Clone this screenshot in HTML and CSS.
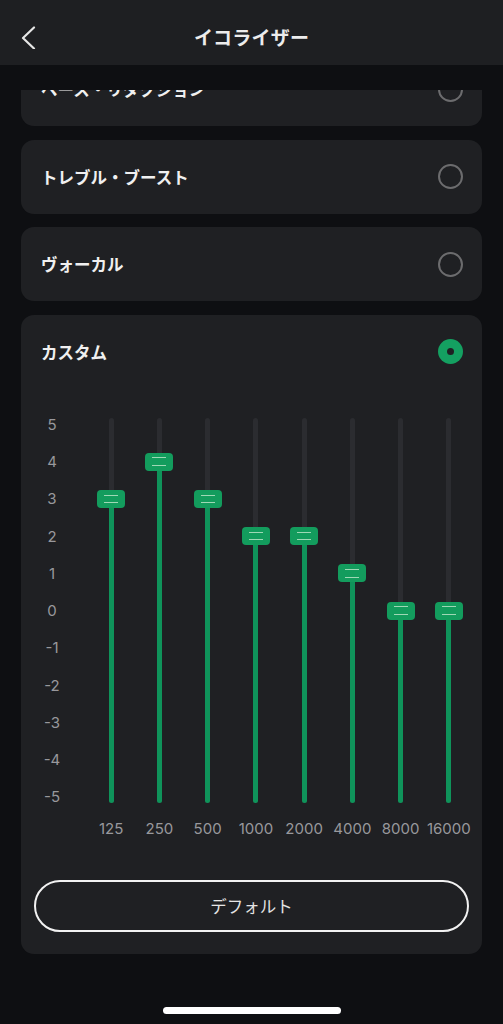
FILE: index.html
```html
<!DOCTYPE html>
<html lang="ja">
<head>
<meta charset="utf-8">
<title>イコライザー</title>
<link rel="stylesheet" href="styles.css">
</head>
<body>
<div class="screen">
  <header class="topbar">
    <svg class="back" width="24" height="24" viewBox="0 0 24 24" aria-hidden="true">
      <path d="M18 2.5 L7 13 L18 23.5" fill="none" stroke="#e6e6e6" stroke-width="2.2" stroke-linecap="round" stroke-linejoin="round"/>
    </svg>
    <h1 class="title">イコライザー</h1>
    <span></span>
  </header>
  <div class="band"></div>

  <main class="scroller">
    <div class="list">
      <div class="card">
        <div class="row"><span class="label">ベース・リダクション</span><span class="radio"></span></div>
      </div>
      <div class="card">
        <div class="row"><span class="label">トレブル・ブースト</span><span class="radio"></span></div>
      </div>
      <div class="card">
        <div class="row"><span class="label">ヴォーカル</span><span class="radio"></span></div>
      </div>

      <div class="card custom">
        <div class="row"><span class="label">カスタム</span><span class="radio is-on"></span></div>

        <div class="chart">
          <div class="axis">
            <span>5</span><span>4</span><span>3</span><span>2</span><span>1</span><span>0</span>
            <span>-1</span><span>-2</span><span>-3</span><span>-4</span><span>-5</span>
          </div>
          <div class="bands">
            <div class="band-col"><div class="track" style="--v:3"><div class="fill"></div><div class="knob"></div></div><span class="freq">125</span></div>
            <div class="band-col"><div class="track" style="--v:4"><div class="fill"></div><div class="knob"></div></div><span class="freq">250</span></div>
            <div class="band-col"><div class="track" style="--v:3"><div class="fill"></div><div class="knob"></div></div><span class="freq">500</span></div>
            <div class="band-col"><div class="track" style="--v:2"><div class="fill"></div><div class="knob"></div></div><span class="freq">1000</span></div>
            <div class="band-col"><div class="track" style="--v:2"><div class="fill"></div><div class="knob"></div></div><span class="freq">2000</span></div>
            <div class="band-col"><div class="track" style="--v:1"><div class="fill"></div><div class="knob"></div></div><span class="freq">4000</span></div>
            <div class="band-col"><div class="track" style="--v:0"><div class="fill"></div><div class="knob"></div></div><span class="freq">8000</span></div>
            <div class="band-col"><div class="track" style="--v:0"><div class="fill"></div><div class="knob"></div></div><span class="freq">16000</span></div>
          </div>
        </div>

        <button class="reset" type="button">デフォルト</button>
      </div>
    </div>
  </main>

  <div class="home-bar"></div>
</div>
</body>
</html>
```

FILE: styles.css
```css
* { box-sizing: border-box; }

html, body {
  margin: 0;
  padding: 0;
  background: #0e0f12;
}

body {
  font-family: "Inter", "Noto Sans CJK JP", sans-serif;
  color: #eeeeee;
}

.screen {
  position: relative;
  width: 503px;
  height: 1024px;
  overflow: hidden;
  background: #0e0f12;
  display: flex;
  flex-direction: column;
}

/* top navigation */
.topbar {
  flex: none;
  height: 65px;
  padding: 8px 16px 0;
  background: #1e1f22;
  display: grid;
  grid-template-columns: 1fr auto 1fr;
  align-items: center;
}

.back { display: block; }

.title {
  margin: 0;
  font-size: 19px;
  font-weight: 700;
  color: #ececec;
  letter-spacing: 0.2px;
}

.band {
  flex: none;
  height: 25px;
}

/* scrolling list */
.scroller {
  flex: 1;
  overflow: hidden;
}

.list {
  margin-top: -38px;
  padding: 0 21px;
  display: flex;
  flex-direction: column;
  gap: 13.5px;
}

.card {
  background: #1f2023;
  border-radius: 13px;
}

.row {
  height: 74px;
  padding: 0 19px 0 20px;
  display: flex;
  align-items: center;
  justify-content: space-between;
}

.label {
  font-size: 16.5px;
  font-weight: 700;
  color: #f0f0f0;
}

.radio {
  width: 25px;
  height: 25px;
  border-radius: 50%;
  border: 2px solid #6c6c6e;
  display: flex;
  align-items: center;
  justify-content: center;
}

.radio.is-on {
  border: none;
  background: #14a061;
}

.radio.is-on::after {
  content: "";
  width: 7px;
  height: 7px;
  border-radius: 50%;
  background: #1f2023;
}

/* equalizer chart */
.custom { padding-bottom: 22px; }

.chart {
  padding: 17.4px 0 0 20px;
  display: flex;
  gap: 24px;
}

.axis {
  width: 22px;
  display: flex;
  flex-direction: column;
}

.axis span {
  height: 37.25px;
  line-height: 37.25px;
  text-align: center;
  font-size: 15px;
  color: #98989c;
}

.bands {
  display: flex;
}

.band-col {
  width: 48.25px;
  display: flex;
  flex-direction: column;
  align-items: center;
}

.track {
  position: relative;
  width: 5px;
  height: 385px;
  margin-top: 12.6px;
  border-radius: 3px;
  background: #2b2c30;
  --fill: calc(192.75px + var(--v) * 37.25px);
}

.fill {
  position: absolute;
  left: 0;
  right: 0;
  bottom: 0;
  height: var(--fill);
  border-radius: 3px;
  background: #0f935a;
}

.knob {
  position: absolute;
  left: 50%;
  bottom: calc(var(--fill) - 9px);
  width: 28px;
  height: 18px;
  margin-left: -14px;
  border-radius: 4px;
  background: #139c5d;
  display: flex;
  align-items: center;
  justify-content: center;
}

.knob::before {
  content: "";
  width: 14px;
  height: 6.5px;
  border-top: 1.5px solid #9fd8b5;
  border-bottom: 1.5px solid #9fd8b5;
}

.freq {
  margin-top: 17px;
  line-height: 18px;
  font-size: 15px;
  color: #98989c;
  white-space: nowrap;
}

/* reset button */
.reset {
  display: block;
  width: calc(100% - 26px);
  height: 52px;
  margin: 42px 13px 0;
  border: 2px solid #f2f2f2;
  border-radius: 26px;
  background: transparent;
  font-family: "Inter", "Noto Sans CJK JP", sans-serif;
  font-size: 16.5px;
  color: #e4e4e4;
  padding: 0;
}

/* home indicator */
.home-bar {
  position: absolute;
  left: 50%;
  bottom: 10px;
  width: 178px;
  height: 7px;
  margin-left: -89px;
  border-radius: 4px;
  background: #ffffff;
}
```
